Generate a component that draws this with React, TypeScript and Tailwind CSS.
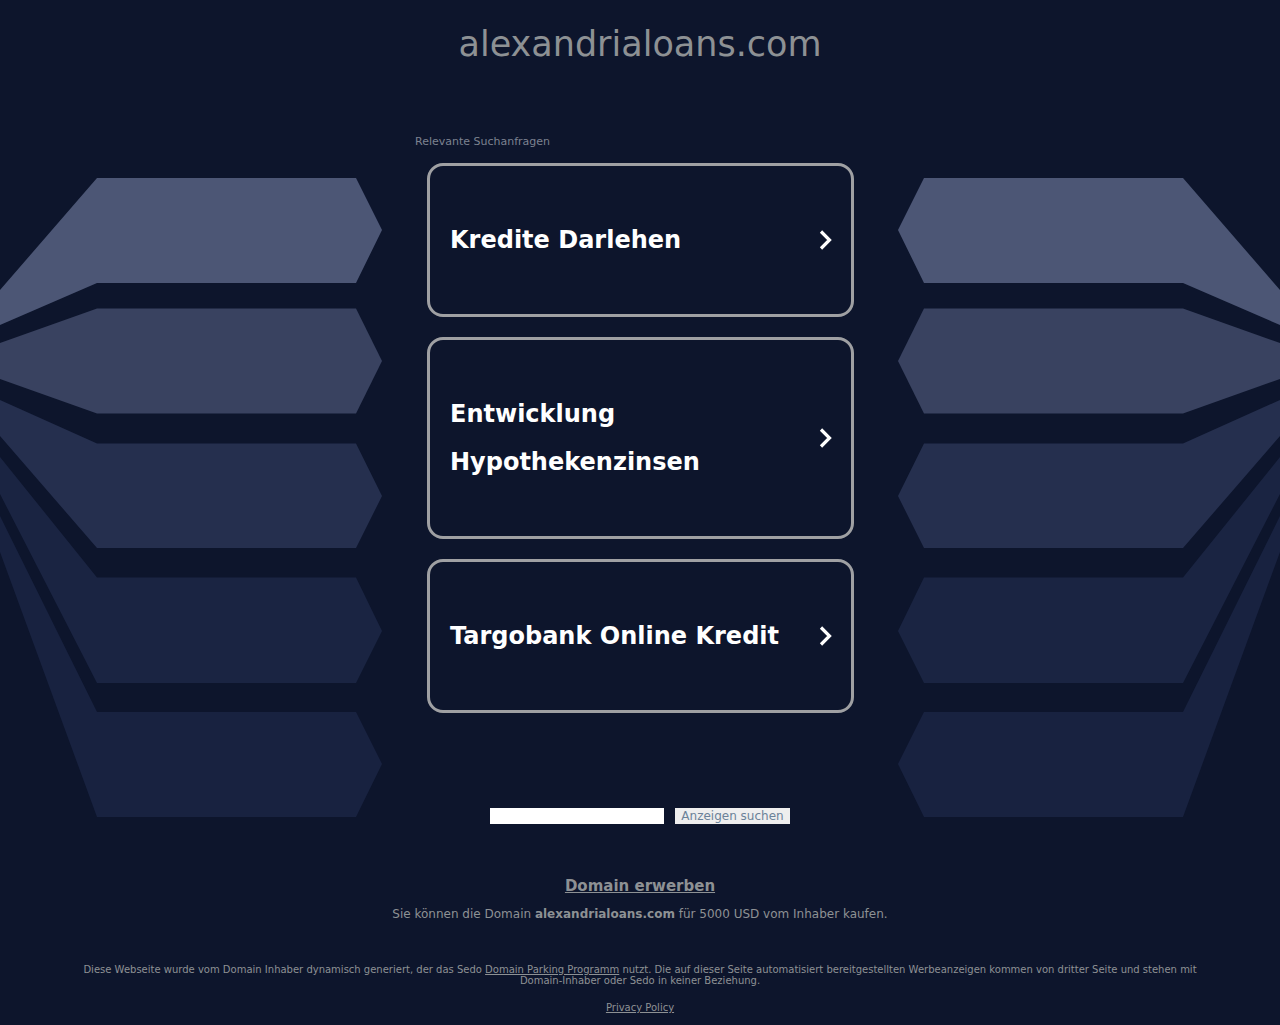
import { useState } from "react";

const domain = "alexandrialoans.com";

const searches = ["Kredite Darlehen", "Entwicklung Hypothekenzinsen", "Targobank Online Kredit"];

const arms = [
    { fill: "#4c5675", points: "0,290 97,178 356,178 382,230 356,283 97,283 0,325" },
    { fill: "#394260", points: "0,343 97,308.5 356,308.5 382,361 356,413.5 97,413.5 0,379" },
    { fill: "#252f4e", points: "0,400 97,443.5 356,443.5 382,496 356,548 97,548 0,436" },
    { fill: "#1a2442", points: "0,457 97,577.5 356,577.5 382,631 356,683 97,683 0,494" },
    { fill: "#182240", points: "0,516 97,712 356,712 382,764 356,817 97,817 0,552" },
];

function Arms() {
    return (
        <>
            {arms.map((arm) => (
                <polygon key={arm.points} fill={arm.fill} points={arm.points} />
            ))}
        </>
    );
}

function Background() {
    return (
        <svg
            viewBox="0 0 1280 1025"
            aria-hidden="true"
            className="pointer-events-none absolute inset-x-0 top-0 -z-10 w-full"
        >
            <Arms />
            <g transform="translate(1280 0) scale(-1 1)">
                <Arms />
            </g>
        </svg>
    );
}

function SearchCard({ label }: { label: string }) {
    return (
        <a
            href="#"
            className="flex items-center justify-between rounded-2xl border-3 border-[#9fa0a3] py-[50px] pr-[18px] pl-5 text-2xl leading-[48px] font-bold text-white"
        >
            <span className="max-w-[340px]">{label}</span>
            <svg viewBox="0 0 14 22" aria-hidden="true" className="h-[22px] w-3.5 shrink-0">
                <path d="M2 2.5 10.5 11 2 19.5" fill="none" stroke="#fff" strokeWidth="3.2" />
            </svg>
        </a>
    );
}

export default function App() {
    const [query, setQuery] = useState("");

    return (
        <div className="relative isolate min-h-screen bg-[#0d152c] font-['DejaVu_Sans',sans-serif] text-[#8d9194]">
            <Background />

            <header className="pt-6 text-center">
                <h1 className="text-[35px] leading-10">{domain}</h1>
            </header>

            <main className="mx-auto max-w-[450px] pt-[70px]">
                <h2 className="text-[11px] leading-4 text-[#7c8290]">Relevante Suchanfragen</h2>
                <ul className="mt-[13px] space-y-5 pr-[11px] pl-3">
                    {searches.map((label) => (
                        <li key={label}>
                            <SearchCard label={label} />
                        </li>
                    ))}
                </ul>
            </main>

            <form
                onSubmit={(e) => e.preventDefault()}
                className="mt-[95px] flex justify-center gap-[11px] text-xs leading-4"
            >
                <input
                    type="text"
                    aria-label="Suchbegriff"
                    value={query}
                    onChange={(e) => setQuery(e.target.value)}
                    className="h-4 w-[174px] bg-white px-1 text-black"
                />
                <button type="submit" className="h-4 bg-[#eeeeee] px-1.5 text-[#6b8299]">
                    Anzeigen suchen
                </button>
            </form>

            <section className="mt-[52px] text-center">
                <h2 className="text-[15px] leading-5 font-bold">
                    <a href="#" className="underline">Domain erwerben</a>
                </h2>
                <p className="mt-2.5 text-xs leading-4">
                    Sie können die Domain <b>{domain}</b> für 5000 USD vom Inhaber kaufen.
                </p>
            </section>

            <footer className="mt-[42px] px-16 text-center text-[10px] leading-[11px]">
                <p>
                    Diese Webseite wurde vom Domain Inhaber dynamisch generiert, der das Sedo{" "}
                    <a href="#" className="underline">Domain Parking Programm</a> nutzt. Die auf dieser Seite
                    automatisiert bereitgestellten Werbeanzeigen kommen von dritter Seite und stehen mit
                    Domain-Inhaber oder Sedo in keiner Beziehung.
                </p>
                <p className="mt-4 pb-3">
                    <a href="#" className="underline">Privacy Policy</a>
                </p>
            </footer>
        </div>
    );
}
